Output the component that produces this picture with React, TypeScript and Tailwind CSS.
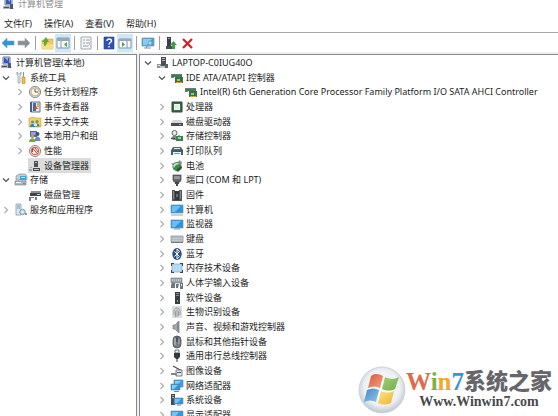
import type { ReactNode } from 'react'
import clsx from 'clsx'

type TreeItem = {
  label: string
  icon: string
  depth: number
  state?: 'open' | 'closed'
  selected?: boolean
}

const icons: Record<string, ReactNode> = {
  console: (
    <>
      <path d="M3 1h7v7H3z" fill="#c9d3df" stroke="#6d7c90" strokeWidth="1" />
      <path d="M4 2h5v5H4z" fill="#3456c4" />
      <path d="M5 2l3 3V2z" fill="#8fb4ee" />
      <path d="M1 9h9l2 3H1z" fill="#aab3bf" />
      <path d="M8 7h3v5H8z" fill="#4d5a70" />
      <path d="M2 10h5v1H2z" fill="#3d4c8a" />
    </>
  ),
  tools: (
    <>
      <path d="M3 1v3l1 1v7h2V5l1-1V1L6 3H4z" fill="#e8edf2" stroke="#8594a3" strokeWidth=".7" />
      <path d="M9 1h1v6H9z" fill="#8c959e" />
      <path d="M8 6h3v6.500H8z" fill="#f0bd3e" stroke="#c08c20" strokeWidth=".6" />
    </>
  ),
  clock: (
    <>
      <circle cx="7" cy="7" r="5.600" fill="#d9dcdf" stroke="#8b8f95" strokeWidth="1" />
      <circle cx="7" cy="7" r="4" fill="#fdf4df" stroke="#c9a55a" strokeWidth=".8" />
      <path d="M7 4v3h3" fill="none" stroke="#4f6279" strokeWidth="1" />
    </>
  ),
  events: (
    <>
      <path d="M3 2h9v10H3z" fill="#dbe6f4" stroke="#5d7397" strokeWidth="1" />
      <path d="M2 2h2v10H2z" fill="#4a5f8b" />
      <path d="M5 3h3v8H5z" fill="#3f69b4" />
      <path d="M9 3h2v4H9z" fill="#e5b236" />
      <path d="M6 9l2-3 2 3z" fill="#d4503d" />
    </>
  ),
  share: (
    <>
      <path d="M1 3l5-1 1 1h6v9H1z" fill="#f2cf69" stroke="#c99f3a" strokeWidth=".6" />
      <circle cx="4.500" cy="7" r="1.500" fill="#4f8fd0" />
      <circle cx="9" cy="6.500" r="1.500" fill="#5aa05a" />
      <path d="M2 12c0-4 5-4 5 0zM7 11.500c0-4 4.500-4 4.500 0z" fill="#3f7fae" />
      <path d="M6 9h3v2H6z" fill="#e9f0d2" />
    </>
  ),
  users: (
    <>
      <path d="M2 2h7v6H2z" fill="#54659c" />
      <path d="M3 3h5v3H3z" fill="#8ba6da" />
      <circle cx="9.500" cy="5" r="2" fill="#3c4f86" />
      <circle cx="4.500" cy="7.500" r="1.800" fill="#c79a56" />
      <path d="M6.500 12c0-6 6-6 6 0z" fill="#7389bb" />
      <path d="M1 13c0-5 6.500-5 6.500 0z" fill="#79a646" />
    </>
  ),
  performance: (
    <>
      <circle cx="7" cy="7" r="5.500" fill="#fbf7f5" stroke="#8a8380" strokeWidth="1" />
      <circle cx="7" cy="7" r="3.800" fill="none" stroke="#c7523f" strokeWidth="1" />
      <path d="M4.500 4l5 6M4.500 8V4M7 4l3 4" stroke="#c23b2f" strokeWidth="1" fill="none" />
    </>
  ),
  devices: (
    <>
      <path d="M6 2h4v6H6z" fill="#4d5257" />
      <path d="M7 3h2v1H7z" fill="#b4babf" />
      <path d="M5 9h7v3H5z" fill="#44494e" />
      <path d="M6 10h5v1H6z" fill="#c6cbd0" />
      <path d="M1 10h3v2H1zM2 8h2v1H2z" fill="#a3a9ae" />
    </>
  ),
  storage: (
    <>
      <path d="M2 3l3-2h6l2 2v4H2z" fill="#c2cdd6" stroke="#75838e" strokeWidth=".6" />
      <path d="M6 3h6v4H6z" fill="#3fa6dc" />
      <path d="M7 4h4v1H7z" fill="#bfe5fa" />
      <path d="M1 8h11v4H1z" fill="#aeb9c2" stroke="#6d7a85" strokeWidth=".6" />
      <path d="M2 9h5v1H2z" fill="#eef2f5" />
      <path d="M9 10h2v1H9z" fill="#48b54c" />
    </>
  ),
  disk: (
    <>
      <path d="M3 3h10l-1 4H2z" fill="#8b9196" />
      <path d="M2 5h11v3H2z" fill="#3e444a" />
      <path d="M9 6h3v1H9z" fill="#9fdcf0" />
      <path d="M1 9h5v1H3v3H1zM7 9h2v3H7z" fill="#777f87" />
    </>
  ),
  services: (
    <>
      <path d="M2 1h5v11H2z" fill="#dce9f2" stroke="#7f9db3" strokeWidth=".8" />
      <path d="M3 3h3M3 5h3" stroke="#6c91ac" strokeWidth="1" />
      <circle cx="8.500" cy="9" r="2.700" fill="#c3d8e6" stroke="#7ba0b9" strokeWidth="1" />
      <circle cx="8.500" cy="9" r="1" fill="#fff" />
      <path d="M11 10h2v2h-2z" fill="#7ba0b9" />
    </>
  ),
  computer: (
    <>
      <path d="M5 1h5v9H5z" fill="#4e5358" />
      <path d="M6 2h3v1H6zM6 4h3v1H6z" fill="#a4aaaf" />
      <path d="M1 8h4v4H1z" fill="#8d949b" />
      <path d="M2 9h2v1H2z" fill="#e5e8eb" />
      <path d="M4 10h6v2H4z" fill="#c5cacf" />
      <path d="M9 8h3v4H9z" fill="#5d6369" />
    </>
  ),
  controller: (
    <>
      <path d="M1 3h11v3H4v1H1z" fill="#717b78" />
      <path d="M2 4h10v4H5V6H2z" fill="#3b7f55" />
      <path d="M5 6h8v6H5z" fill="#33734c" />
      <path d="M7 8h3v2H7z" fill="#a9c95f" />
      <path d="M6 11h6v1H6z" fill="#cda83c" />
    </>
  ),
  cpu: (
    <>
      <path d="M2 2h10v10H2z" fill="#3c6b4c" stroke="#2b4a37" strokeWidth="1" />
      <path d="M4 4h6v6H4z" fill="#f3f8f4" />
      <path d="M5 5h4v4H5z" fill="#dcefe1" />
    </>
  ),
  drive: (
    <>
      <path d="M3 5h8l2 3H1z" fill="#d3d7da" />
      <path d="M1 8h12v3H1z" fill="#484d52" />
      <path d="M9 9h2v1H9z" fill="#9ea6ad" />
    </>
  ),
  storagectl: (
    <>
      <circle cx="4.500" cy="4" r="2.500" fill="#e5eae6" stroke="#5d6963" strokeWidth="1" />
      <path d="M1 9l3-3 3 1 3-1v5H3z" fill="#7d8a84" />
      <path d="M6 7h7v5H6z" fill="#3b8055" />
      <path d="M8 8h3v2H8z" fill="#9ad0aa" />
      <path d="M1 9h4v1H1z" fill="#444d49" />
    </>
  ),
  printer: (
    <>
      <path d="M3 3h8l2 3H1z" fill="#56676f" />
      <path d="M4 4h6v1H4z" fill="#d7eef0" />
      <path d="M1 6h12v5h-2V8H3v3H1z" fill="#39606a" />
      <path d="M4 8h6v3H4z" fill="#eaf6f4" />
      <path d="M4 9h6v1H4z" fill="#58b39a" />
    </>
  ),
  battery: (
    <>
      <path d="M9 1l3 2-1 3-3-2z" fill="#8b9490" />
      <circle cx="7" cy="7.500" r="4.600" fill="#418a4b" />
      <path d="M3 7c2-4 5-3 7-2-3 0-5 1-6 4z" fill="#c8e6c6" />
      <path d="M6 11l5-4 1 2-4 4z" fill="#2d4f34" />
      <path d="M1 4l3 1-1 1z" fill="#56635a" />
    </>
  ),
  port: (
    <>
      <path d="M3 2h8v5l-1 2H4L3 7z" fill="#63686c" stroke="#3e4246" strokeWidth=".7" />
      <path d="M5 3v3M7 3v3M9 3v3" stroke="#d5d9dc" strokeWidth=".8" />
      <path d="M5 9h4v2H5zM6 11h2v2H6z" fill="#44484c" />
    </>
  ),
  firmware: (
    <>
      <path d="M2 2h3v1h4V2h3v11H2z" fill="#505459" />
      <path d="M5 3h4v9H5z" fill="#34383c" />
      <path d="M3 4h1M3 6h1M3 8h1M3 10h1M10 4h1M10 6h1M10 8h1M10 10h1" stroke="#b8bdc2" strokeWidth="1" />
      <path d="M6 6h2v3H6z" fill="#686d72" />
    </>
  ),
  pc: (
    <>
      <path d="M1 2h12v8H1z" fill="#2e93dc" stroke="#6b93b0" strokeWidth=".7" />
      <path d="M2 3h9L5 9H2z" fill="#69bff4" />
      <path d="M1 12h12" stroke="#97a1a9" strokeWidth="1" />
    </>
  ),
  monitor: (
    <>
      <path d="M1 3h12v8H1z" fill="#2e93dc" stroke="#6b93b0" strokeWidth=".7" />
      <path d="M2 4h9l-6 6H2z" fill="#69bff4" />
      <path d="M4 12h6" stroke="#8a949c" strokeWidth="1" />
    </>
  ),
  keyboard: (
    <>
      <path d="M1 4h12v6H1z" fill="#c2c8cd" stroke="#7e868d" strokeWidth=".7" />
      <path d="M2 5.500h10M2 7.500h10" stroke="#a3abb2" strokeWidth=".7" strokeDasharray="1 .6" />
      <path d="M1 10h12v1H1z" fill="#747c83" />
    </>
  ),
  bluetooth: (
    <>
      <ellipse cx="7" cy="7" rx="4.700" ry="6" fill="#264f86" />
      <path d="M4.500 4.500l5 5L7 12V2l2.500 2.500-5 5" fill="none" stroke="#fff" strokeWidth="1" />
    </>
  ),
  memory: (
    <>
      <path d="M2 3h10v8H2z" fill="#b4dcf7" stroke="#7ba5c2" strokeWidth=".7" />
      <path d="M1 2h3v1H2v2H1zM10 2h3v3h-1V3h-2zM1 9h1v2h2v1H1zM12 9h1v3h-3v-1h2z" fill="#2f4a60" />
    </>
  ),
  hid: (
    <>
      <path d="M1 2h11v5H1z" fill="#9ba3a9" stroke="#6c757c" strokeWidth=".6" />
      <path d="M2 4h9" stroke="#e2e6e9" strokeWidth="1" strokeDasharray="1 1" />
      <path d="M2 7h3v5H1V9zM6 8h3l-1 4H6zM10 7h3v6h-3z" fill="#6d7982" />
      <path d="M11 8h1v2h-1z" fill="#cfe0e8" />
    </>
  ),
  software: (
    <>
      <path d="M5 1h5v12H5z" fill="#3a3e42" />
      <path d="M6 2h3v1H6zM6 4h3v1H6z" fill="#878e94" />
      <path d="M7 9h1v2H7z" fill="#5fc873" />
    </>
  ),
  biometric: (
    <>
      <path d="M2 1h10v12H2z" fill="#dcdfe1" />
      <path
        d="M4 10V6c0-4 6-4 6 0v4M5.500 12V6.500c0-2 3-2 3 0V11M7 6v6"
        fill="none"
        stroke="#8d9397"
        strokeWidth=".9"
      />
    </>
  ),
  sound: (
    <>
      <path d="M3 5h2l4-4v12L5 9H3z" fill="#a4a9ad" stroke="#73797e" strokeWidth=".7" />
      <path d="M7 3.500l2-2v11l-2-2z" fill="#85898d" />
    </>
  ),
  mouse: (
    <>
      <rect x="3" y="1" width="8" height="12" rx="4" fill="#767d83" stroke="#484d52" strokeWidth=".8" />
      <path d="M5 3v7" stroke="#c9ced2" strokeWidth="1" />
      <path d="M7 2v5" stroke="#2d3236" strokeWidth="1" />
      <path d="M9 4v5" stroke="#a6bfd2" strokeWidth=".8" />
    </>
  ),
  usb: (
    <>
      <path d="M5 1h4v3H5z" fill="#eceeef" stroke="#55595d" strokeWidth=".8" />
      <path d="M4 4h6v4L8 10H6L4 8z" fill="#35393d" />
      <path d="M6.500 10h1v3h-1z" fill="#35393d" />
    </>
  ),
  imaging: (
    <>
      <path d="M3 2l9 5" stroke="#484d52" strokeWidth="1.200" />
      <path d="M6 6h6v6H6z" fill="#e6e9eb" stroke="#5b6267" strokeWidth=".8" />
      <path d="M1 9h6v2H1z" fill="#7d858b" />
      <path d="M7 8h4v1H7z" fill="#4d5459" />
    </>
  ),
  network: (
    <>
      <path d="M4 1h9v7H4z" fill="#3b9fe0" stroke="#577f9c" strokeWidth=".6" />
      <path d="M5 2h6L6 7H5z" fill="#84cdf7" />
      <path d="M1 5h9v6H1z" fill="#318fd2" stroke="#5f8ba7" strokeWidth=".6" />
      <path d="M2 6h6l-4 4H2z" fill="#7fcbf5" />
      <path d="M4 12h5v1H4z" fill="#43aa7e" />
    </>
  ),
  system: (
    <>
      <path d="M1 1h4v11H1z" fill="#434a50" />
      <path d="M2 2h2v1H2zM2 4h2v1H2z" fill="#a9b1b7" />
      <path d="M4 5h9v6H4z" fill="#3598db" stroke="#5f8ba7" strokeWidth=".6" />
      <path d="M5 6h6l-4 4H5z" fill="#73c3f3" />
      <path d="M7 12h4" stroke="#7c868e" strokeWidth="1" />
    </>
  ),
  display: (
    <>
      <path d="M1 3h12v8H1z" fill="#3598db" stroke="#5f8ba7" strokeWidth=".6" />
      <path d="M2 4h7l-5 6H2z" fill="#73c3f3" />
      <path d="M6 8h7v4H6z" fill="#357a50" />
      <path d="M8 9h2v2H8z" fill="#b6dfc1" />
    </>
  ),
  back: <path d="M1 7l5-5v3h7v4H6v3z" fill="#2f96d6" stroke="#5aa9d8" strokeWidth=".6" />,
  forward: <path d="M13 7L8 2v3H1v4h7v3z" fill="#8b8f93" stroke="#a2a6a9" strokeWidth=".6" />,
  up: (
    <>
      <path d="M2 4h4l1-1h6v10H2z" fill="#edcd62" stroke="#c9a53c" strokeWidth=".6" />
      <path d="M2 8h11v5H2z" fill="#f6dd86" />
      <path d="M4 10V6H2l4-5 3 5H7c0 2-1 4-3 4z" fill="#6ba52f" />
    </>
  ),
  treePane: (
    <>
      <path d="M1 2h12v10H1z" fill="#f6f8fa" stroke="#8996a2" strokeWidth="1" />
      <path d="M1 2h12v3H1z" fill="#98a7b5" />
      <path d="M5 5v7" stroke="#8996a2" strokeWidth="1" />
      <path d="M11 6v5L8 8.500z" fill="#49a156" />
    </>
  ),
  properties: (
    <>
      <path d="M2 1h10v12H2z" fill="#f5f6f7" stroke="#a4a9ae" strokeWidth="1" />
      <path d="M4 4h2M7 4h4M4 7h2M7 7h4M4 10h5" stroke="#9ba2a8" strokeWidth="1" />
      <path d="M8 11l3-3" stroke="#bcc1c5" strokeWidth="1" />
    </>
  ),
  help: (
    <>
      <path d="M2 1h10v12H2z" fill="#2f52b3" stroke="#23408f" strokeWidth=".6" />
      <path d="M5 5c0-3 4.500-2.500 4.500 0C9.500 6.500 7 6.500 7 8.500M7 10v1.500" fill="none" stroke="#fff" strokeWidth="1.400" />
    </>
  ),
  actionPane: (
    <>
      <path d="M1 3h12v9H1z" fill="#f6f8fa" stroke="#8b959e" strokeWidth="1" />
      <path d="M1 3h12v2H1z" fill="#9ca9b4" />
      <path d="M9 5v7" stroke="#8b959e" strokeWidth="1" />
      <path d="M4 6v5l3-2.500z" fill="#49a156" />
    </>
  ),
  scan: (
    <>
      <path d="M1 2h12v8H1z" fill="#479fd6" stroke="#7ba0b8" strokeWidth=".8" />
      <path d="M2 3h9L6 9H2z" fill="#8acbf0" />
      <circle cx="9" cy="7" r="2" fill="#b5def2" stroke="#4b9fcf" strokeWidth=".8" />
      <path d="M3 12h7M8 8.500l-3 3" stroke="#7f9eb2" strokeWidth="1.200" />
    </>
  ),
  update: (
    <>
      <path d="M3 1h4v9H3z" fill="#3b3f43" />
      <path d="M2 10h6v3H2z" fill="#4b5055" />
      <path d="M4 2h2v1H4z" fill="#9ba2a8" />
      <path d="M9.500 5L13 9h-2v4H8V9H6z" fill="#3f9d49" />
    </>
  ),
  remove: <path d="M3 3l9 9M12 3l-9 9" stroke="#cf2127" strokeWidth="2.200" />,
}

const consoleTree: TreeItem[] = [
  { label: '计算机管理(本地)', icon: 'console', depth: 0 },
  { label: '系统工具', icon: 'tools', depth: 0, state: 'open' },
  { label: '任务计划程序', icon: 'clock', depth: 1, state: 'closed' },
  { label: '事件查看器', icon: 'events', depth: 1, state: 'closed' },
  { label: '共享文件夹', icon: 'share', depth: 1, state: 'closed' },
  { label: '本地用户和组', icon: 'users', depth: 1, state: 'closed' },
  { label: '性能', icon: 'performance', depth: 1, state: 'closed' },
  { label: '设备管理器', icon: 'devices', depth: 2, selected: true },
  { label: '存储', icon: 'storage', depth: 0, state: 'open' },
  { label: '磁盘管理', icon: 'disk', depth: 2 },
  { label: '服务和应用程序', icon: 'services', depth: 0, state: 'closed' },
]

const deviceTree: TreeItem[] = [
  { label: 'LAPTOP-C0IUG40O', icon: 'computer', depth: 0, state: 'open' },
  { label: 'IDE ATA/ATAPI 控制器', icon: 'controller', depth: 1, state: 'open' },
  {
    label: 'Intel(R) 6th Generation Core Processor Family Platform I/O SATA AHCI Controller',
    icon: 'controller',
    depth: 3,
  },
  { label: '处理器', icon: 'cpu', depth: 1, state: 'closed' },
  { label: '磁盘驱动器', icon: 'drive', depth: 1, state: 'closed' },
  { label: '存储控制器', icon: 'storagectl', depth: 1, state: 'closed' },
  { label: '打印队列', icon: 'printer', depth: 1, state: 'closed' },
  { label: '电池', icon: 'battery', depth: 1, state: 'closed' },
  { label: '端口 (COM 和 LPT)', icon: 'port', depth: 1, state: 'closed' },
  { label: '固件', icon: 'firmware', depth: 1, state: 'closed' },
  { label: '计算机', icon: 'pc', depth: 1, state: 'closed' },
  { label: '监视器', icon: 'monitor', depth: 1, state: 'closed' },
  { label: '键盘', icon: 'keyboard', depth: 1, state: 'closed' },
  { label: '蓝牙', icon: 'bluetooth', depth: 1, state: 'closed' },
  { label: '内存技术设备', icon: 'memory', depth: 1, state: 'closed' },
  { label: '人体学输入设备', icon: 'hid', depth: 1, state: 'closed' },
  { label: '软件设备', icon: 'software', depth: 1, state: 'closed' },
  { label: '生物识别设备', icon: 'biometric', depth: 1, state: 'closed' },
  { label: '声音、视频和游戏控制器', icon: 'sound', depth: 1, state: 'closed' },
  { label: '鼠标和其他指针设备', icon: 'mouse', depth: 1, state: 'closed' },
  { label: '通用串行总线控制器', icon: 'usb', depth: 1, state: 'closed' },
  { label: '图像设备', icon: 'imaging', depth: 1, state: 'closed' },
  { label: '网络适配器', icon: 'network', depth: 1, state: 'closed' },
  { label: '系统设备', icon: 'system', depth: 1, state: 'closed' },
  { label: '显示适配器', icon: 'display', depth: 1, state: 'closed' },
]

const menus = ['文件(F)', '操作(A)', '查看(V)', '帮助(H)']

const toolbar = [
  [
    { label: '后退', icon: 'back' },
    { label: '前进', icon: 'forward' },
  ],
  [
    { label: '上移', icon: 'up' },
    { label: '显示/隐藏控制台树', icon: 'treePane', pressed: true },
  ],
  [{ label: '属性', icon: 'properties' }],
  [
    { label: '帮助', icon: 'help' },
    { label: '显示/隐藏操作窗格', icon: 'actionPane', pressed: true },
  ],
  [{ label: '扫描检测硬件改动', icon: 'scan' }],
  [
    { label: '更新驱动程序', icon: 'update' },
    { label: '卸载', icon: 'remove' },
  ],
]

const indents = ['pl-0', 'pl-[14px]', 'pl-[28px]', 'pl-[42px]']

const Icon = ({ name }: { name: string }) => (
  <svg viewBox="0 0 14 14" className="h-[14px] w-[14px] shrink-0" aria-hidden="true">
    {icons[name]}
  </svg>
)

const Chevron = ({ open, label }: { open: boolean; label: string }) => (
  <button
    type="button"
    aria-label={label}
    aria-expanded={open}
    className={clsx('mr-0.5 flex w-3 shrink-0 justify-center', open ? 'text-[#505050]' : 'text-[#acacac]')}
  >
    <svg viewBox="0 0 8 8" className="h-2 w-2" fill="none" stroke="currentColor" strokeWidth="1.200">
      <path d={open ? 'M1 2.500l3 3 3-3' : 'M2.500 1l3 3-3 3'} />
    </svg>
  </button>
)

// Row heights run 15, 15, 14 down the list
const Tree = ({ items, label }: { items: TreeItem[]; label: string }) => (
  <ul aria-label={label}>
    {items.map((item) => (
      <li
        key={item.label}
        className={clsx('flex h-[15px] items-center whitespace-nowrap nth-[3n]:h-[14px]', indents[item.depth])}
      >
        {item.state && <Chevron open={item.state === 'open'} label={item.label} />}
        <span className={clsx('flex h-full items-center gap-0.5', item.selected && 'bg-[#dcdcdc] pr-0.5')}>
          <Icon name={item.icon} />
          {item.label}
        </span>
      </li>
    ))}
  </ul>
)

const Watermark = () => (
  <div className="absolute right-1.5 bottom-0.5 flex items-center whitespace-nowrap">
    <svg viewBox="0 0 48 48" className="h-12 w-12" aria-hidden="true">
      <defs>
        <radialGradient id="orb" cx=".5" cy=".45" r=".55">
          <stop offset="0" stopColor="#ffffff" />
          <stop offset=".7" stopColor="#eef1f4" />
          <stop offset="1" stopColor="#bcc6cf" />
        </radialGradient>
        <linearGradient id="red" x2="1" y2="1">
          <stop offset="0" stopColor="#dc5a3a" />
          <stop offset="1" stopColor="#f0a27c" />
        </linearGradient>
        <linearGradient id="green" x2="1" y2="1">
          <stop offset="0" stopColor="#a5cf6e" />
          <stop offset="1" stopColor="#6fae54" />
        </linearGradient>
        <linearGradient id="blue" x2="1" y2="1">
          <stop offset="0" stopColor="#4a86c4" />
          <stop offset="1" stopColor="#8fc6ec" />
        </linearGradient>
        <linearGradient id="yellow" x2="1" y2="1">
          <stop offset="0" stopColor="#fbe08a" />
          <stop offset="1" stopColor="#f0b62d" />
        </linearGradient>
      </defs>
      <circle cx="24" cy="24" r="23" fill="url(#orb)" stroke="#cdd4da" strokeWidth="1" />
      <path d="M13 10c4-3 8-2 12 0l-3 12c-4-2-8-2-12 0z" fill="url(#red)" />
      <path d="M27 11c4 2 9 3 14 0l-4 12c-4 2-9 2-13 0z" fill="url(#green)" />
      <path d="M9 24c4-2 8-2 12 0l-3 12c-4-2-8-2-12 0z" fill="url(#blue)" />
      <path d="M23 25c4 2 9 2 13 0l-3 12c-5 2-9 2-13 0z" fill="url(#yellow)" />
    </svg>
    <div className="flex flex-col items-center">
      <p className="flex items-center font-['Liberation_Serif','Noto_Sans_CJK_SC',serif] text-[22px] leading-6 font-black text-[#66666a]">
        <span className="text-[25px]">
          <span className="text-[#e2694a]">W</span>
          <span className="text-[#7cb342]">i</span>
          <span className="text-[#f0a830]">n</span>
          <span className="text-[#2f9ad6]">7</span>
        </span>
        系统之家
      </p>
      <a
        href="http://www.winwin7.com"
        className="font-['Liberation_Serif',serif] text-[14px] leading-4 font-bold text-[#4a4a4c]"
      >
        Www.Winwin7.com
      </a>
    </div>
  </div>
)

export default function App() {
  return (
    <div className="relative flex h-screen flex-col overflow-hidden bg-white font-['Noto_Sans','Noto_Sans_CJK_SC',sans-serif] text-[9px] leading-3 text-[#1c1c1c]">
      <header className="flex h-2 shrink-0 items-center gap-0.5 pl-0.5 text-[#8c8c8c]">
        <Icon name="console" />
        <h1>计算机管理</h1>
      </header>

      <nav className="flex h-6 shrink-0 items-center gap-3 pt-2 pl-1">
        {menus.map((menu) => (
          <button key={menu} type="button">
            {menu}
          </button>
        ))}
      </nav>

      <div role="toolbar" className="flex h-5 shrink-0 items-center border-t border-[#a8a8a8]">
        {toolbar.map((group, index) => (
          <div key={index} className="flex items-center">
            {index > 0 && <span className="mx-[3px] h-[14px] w-px bg-[#a0a0a0]" />}
            {group.map((button) => (
              <button
                key={button.label}
                type="button"
                aria-label={button.label}
                className={clsx(
                  'flex h-[18px] w-4 items-center justify-center',
                  'pressed' in button && 'bg-[#cce8fb]',
                )}
              >
                <Icon name={button.icon} />
              </button>
            ))}
          </div>
        ))}
      </div>

      <main className="flex min-h-0 flex-1 gap-0.5 bg-[#f0f0f0] pt-0.5">
        <aside className="w-[137px] shrink-0 overflow-hidden border-t border-r border-[#828790] bg-white">
          <Tree items={consoleTree} label="控制台树" />
        </aside>
        <section className="min-w-0 flex-1 overflow-hidden border-t border-l border-[#828790] bg-white pl-0.5">
          <Tree items={deviceTree} label="设备" />
        </section>
      </main>

      <Watermark />
    </div>
  )
}
